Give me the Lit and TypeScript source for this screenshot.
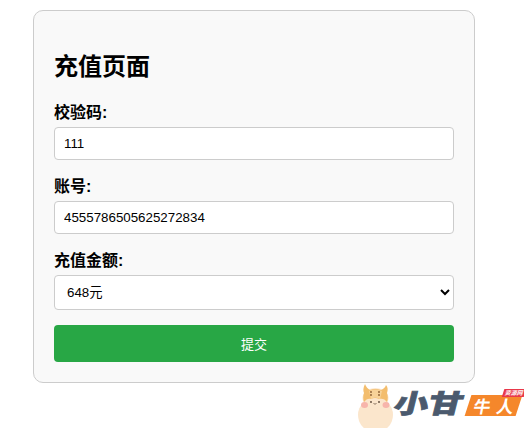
import { LitElement, html, css } from "lit";
import { customElement } from "lit/decorators.js";

@customElement("app-root")
export class AppRoot extends LitElement {
  static styles = css`
    :host {
      display: block;
      position: relative;
      height: 428px;
      overflow: hidden;
      padding: 10px 16px 0 33px;
      box-sizing: border-box;
      background: #fff;
      font-family: "Liberation Sans", "Noto Sans CJK SC", sans-serif;
      color: #000;
    }
    .card {
      box-sizing: border-box;
      width: 442px;
      height: 373px;
      padding: 20px;
      background: #f9f9f9;
      border: 1px solid #ccc;
      border-radius: 10px;
    }
    h2 {
      margin: 20px 0 21px;
      font-size: 24px;
      line-height: 32px;
      font-weight: 700;
    }
    .field {
      display: flex;
      flex-direction: column;
      margin-bottom: 18px;
    }
    .field.last {
      margin-bottom: 15px;
    }
    label {
      font-size: 16px;
      line-height: 18px;
      font-weight: 700;
      margin-bottom: 5px;
    }
    input,
    select {
      box-sizing: border-box;
      width: 400px;
      border: 1px solid #ccc;
      border-radius: 4px;
      background-color: #fff;
      font: 13.33px "Liberation Sans", "Noto Sans CJK SC", sans-serif;
      color: #000;
      outline: none;
      margin: 0;
    }
    input {
      height: 33px;
      padding: 8px 9px;
    }
    select {
      height: 35px;
      padding: 8px;
    }
    button {
      display: block;
      width: 400px;
      height: 37px;
      border: 0;
      border-radius: 4px;
      background: #28a745;
      color: #fff;
      font: 13px "Liberation Sans", "Noto Sans CJK SC", sans-serif;
      padding: 0;
    }
    .logo {
      position: absolute;
      left: 356px;
      top: 382px;
      width: 168px;
      height: 46px;
      display: flex;
      align-items: flex-start;
    }
    .mascot {
      flex: none;
      width: 38px;
      height: 46px;
    }
    .xg {
      flex: none;
      width: 74px;
      margin-top: 1px;
      font: 900 26px/38px "Noto Sans CJK SC", sans-serif;
      color: #4b5a6e;
      -webkit-text-stroke: 0.7px #4b5a6e;
      white-space: nowrap;
      transform: translateX(1px) skewX(-14deg) scaleX(1.32);
      transform-origin: left center;
    }
    .tag {
      position: relative;
      flex: none;
      margin-top: 13px;
      width: 51px;
      height: 21px;
      background: #f5872b;
      transform: skewX(-18deg);
      color: #fff;
      display: flex;
      justify-content: center;
      font: 700 17px/21px "Noto Sans CJK SC", sans-serif;
      white-space: nowrap;
    }
    .tag > span {
      transform: skewX(8deg);
      letter-spacing: 6px;
      margin-right: -6px;
    }
    .tag small {
      position: absolute;
      right: -2px;
      top: -6px;
      width: 22px;
      height: 8px;
      background: #e8384a;
      font: 700 6px/8px "Noto Sans CJK SC", sans-serif;
      text-align: center;
      overflow: hidden;
    }
  `;

  render() {
    return html`
      <div class="card">
        <h2>充值页面</h2>
        <div class="field">
          <label>校验码:</label>
          <input type="text" .value=${"111"} />
        </div>
        <div class="field">
          <label>账号:</label>
          <input type="text" .value=${"4555786505625272834"} />
        </div>
        <div class="field last">
          <label>充值金额:</label>
          <select>
            <option>648元</option>
          </select>
        </div>
        <button>提交</button>
      </div>
      <div class="logo">
        <svg class="mascot" viewBox="0 0 38 46">
          <circle cx="19.5" cy="33" r="17.5" fill="#fbe6cc" />
          <ellipse cx="19.5" cy="16" rx="13" ry="10" fill="#fbe6cc" />
          <path d="M9 2 C7 6 7 9 8 11 C7 14 7 17 8 20 C10 17 13 16 15 17 Q19 15 23 17 C26 16 29 17 31 20 C32 17 32 14 31 11 C32 8 32 5 30 3 C29 6 27 7 25 8 Q19 6 14 8 C12 7 10 5 9 2Z" fill="#f3bd6d" />
          <path d="M13 9 Q19 6 26 9 L24 17 Q19 14 15 17Z" fill="#f7d298" />
          <circle cx="15" cy="10" r="0.9" fill="#8a5d30" />
          <circle cx="23" cy="10" r="0.9" fill="#8a5d30" />
          <circle cx="15" cy="13" r="0.9" fill="#8a5d30" />
          <circle cx="23" cy="13" r="0.9" fill="#8a5d30" />
          <circle cx="15" cy="20" r="0.9" fill="#5a4636" />
          <circle cx="23" cy="20" r="0.9" fill="#5a4636" />
          <path d="M17.5 21.5 Q19 22.8 20.5 21.5" stroke="#5a4636" stroke-width="0.7" fill="none" />
          <ellipse cx="8.5" cy="23" rx="3.5" ry="3" fill="#f7b5ab" />
          <ellipse cx="30" cy="23" rx="3.5" ry="3" fill="#f7b5ab" />
        </svg>
        <div class="xg">小甘</div>
        <div class="tag"><span>牛人</span><small>资源网</small></div>
      </div>
    `;
  }
}
